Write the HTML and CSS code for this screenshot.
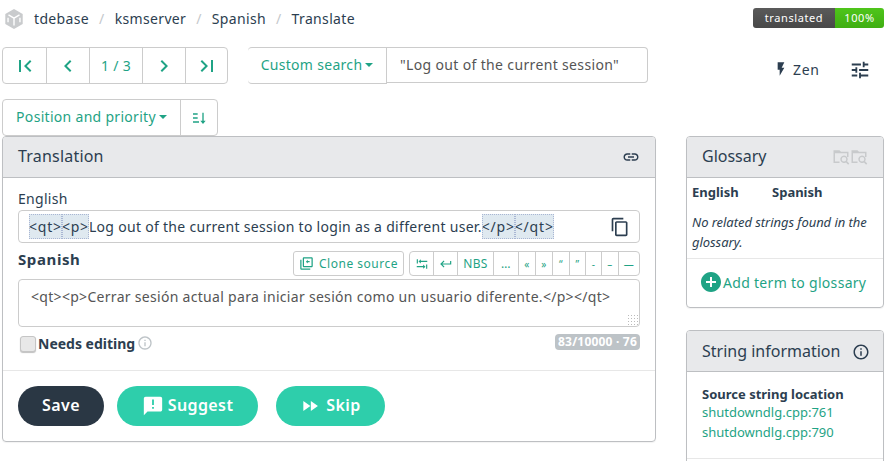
FILE: index.html
```html
<!DOCTYPE html>
<html lang="en">
<head>
    <meta charset="UTF-8">
    <title>Translate</title>
    <link rel="stylesheet" href="styles.css">
</head>
<body>

<header class="topbar">
    <nav class="crumbs">
        <svg class="logo" viewBox="0 0 24 24"><path d="M12 1 2.500 6.500v11L12 23l9.500-5.500v-11z"/><path class="logo-lines" d="M6 7.500 12 11l6-3.500M12 11v8M5.500 10.500v5M18.500 10.500v5"/></svg>
        <a>tdebase</a><span class="sep">/</span>
        <a>ksmserver</a><span class="sep">/</span>
        <a>Spanish</a><span class="sep">/</span>
        <a>Translate</a>
    </nav>
    <div class="badge"><span class="badge-label">translated</span><span class="badge-value">100%</span></div>
</header>

<div class="toolbar">
    <div class="btn-group">
        <a class="btn nav-btn"><svg viewBox="0 0 24 24"><path d="M18.410 16.590 13.820 12l4.590-4.590L17 6l-6 6 6 6zM6 6h2v12H6z"/></svg></a>
        <a class="btn nav-btn"><svg viewBox="0 0 24 24"><path d="M15.410 16.580 10.830 12l4.580-4.590L14 6l-6 6 6 6z"/></svg></a>
        <a class="btn nav-pos">1 / 3</a>
        <a class="btn nav-btn"><svg viewBox="0 0 24 24"><path d="M8.590 16.580 13.170 12 8.590 7.410 10 6l6 6-6 6z"/></svg></a>
        <a class="btn nav-btn last"><svg viewBox="0 0 24 24"><path d="M5.590 7.410 10.180 12l-4.590 4.590L7 18l6-6-6-6zM16 6h2v12h-2z"/></svg></a>
    </div>
    <div class="search">
        <a class="btn search-type">Custom search<span class="caret"></span></a>
        <div class="search-input">"Log out of the current session"</div>
    </div>
    <a class="zen"><svg viewBox="0 0 24 24"><path d="M7 2v11h3v9l7-12h-4l4-8z"/></svg>Zen</a>
    <svg class="tune" viewBox="0 0 24 24"><path d="M3 17v2h6v-2H3zM3 5v2h10V5H3zm10 16v-2h8v-2h-8v-2h-2v6h2zM7 9v2H3v2h4v2h2V9H7zm14 4v-2H11v2h10zm-6-4h2V7h4V5h-4V3h-2v6z"/></svg>
</div>

<div class="sortbar">
    <div class="btn-group">
        <a class="btn sort-type">Position and priority<span class="caret"></span></a>
        <a class="btn sort-dir"><svg viewBox="0 0 24 24"><path d="M3 5h7v2H3zm0 6h7v2H3zm0 6h9v2H3zM17 4h2v12h3l-4 5-4-5h3z"/></svg></a>
    </div>
</div>

<main class="columns">
    <section class="panel translation">
        <div class="panel-heading">
            <h4>Translation</h4>
            <svg class="heading-icon" viewBox="0 0 24 24"><path d="M3.900 12c0-1.710 1.390-3.100 3.100-3.100h4V7H7c-2.760 0-5 2.240-5 5s2.240 5 5 5h4v-1.900H7c-1.710 0-3.100-1.390-3.100-3.100zM8 13h8v-2H8v2zm9-6h-4v1.900h4c1.710 0 3.100 1.390 3.100 3.100s-1.390 3.100-3.100 3.100h-4V17h4c2.760 0 5-2.240 5-5s-2.240-5-5-5z"/></svg>
        </div>
        <div class="panel-body">
            <div class="source-label">English</div>
            <div class="source">
                <span class="source-text"><span class="hl">&lt;qt&gt;</span><span class="hl">&lt;p&gt;</span>Log out of the current session to login as a different user.<span class="hl">&lt;/p&gt;</span><span class="hl">&lt;/qt&gt;</span></span>
                <svg class="copy" viewBox="0 0 24 24"><path d="M16 1H4c-1.100 0-2 .9-2 2v14h2V3h12V1zm3 4H8c-1.100 0-2 .9-2 2v14c0 1.100.9 2 2 2h11c1.100 0 2-.9 2-2V7c0-1.100-.9-2-2-2zm0 16H8V7h11v14z"/></svg>
            </div>
            <div class="target-head">
                <label class="target-label">Spanish</label>
                <a class="btn-xs clone"><svg viewBox="0 0 24 24"><path d="M4 6H2v14c0 1.100.9 2 2 2h14v-2H4V6zm16-4H8c-1.100 0-2 .9-2 2v12c0 1.100.9 2 2 2h12c1.100 0 2-.9 2-2V4c0-1.100-.9-2-2-2zm0 14H8V4h12v12zM14 6l-3 3 3 3v-2h3V8h-3z"/></svg>Clone source</a>
                <div class="btn-group chars">
                    <a class="btn-xs"><svg viewBox="0 0 24 24"><path d="M3 4h2v7H3zm3 3.500L10 4v2.500h11v2H10V11zM19 13h2v7h-2zm-1 3.500L14 13v2.500H3v2h11V20z"/></svg></a>
                    <a class="btn-xs"><svg viewBox="0 0 24 24"><path d="M19 7v4H5.830l3.580-3.590L8 6l-6 6 6 6 1.410-1.410L5.830 13H21V7z"/></svg></a>
                    <a class="btn-xs">NBS</a>
                    <a class="btn-xs">…</a>
                    <a class="btn-xs small">«</a>
                    <a class="btn-xs small">»</a>
                    <a class="btn-xs small">“</a>
                    <a class="btn-xs small">”</a>
                    <a class="btn-xs small">-</a>
                    <a class="btn-xs small">–</a>
                    <a class="btn-xs small">—</a>
                </div>
            </div>
            <div class="target">&lt;qt&gt;&lt;p&gt;Cerrar sesión actual para iniciar sesión como un usuario diferente.&lt;/p&gt;&lt;/qt&gt;<span class="grip"></span></div>
            <div class="target-foot">
                <label class="check"><span class="checkbox"></span>Needs editing</label>
                <svg class="help" viewBox="0 0 24 24"><path d="M11 7h2v2h-2zm0 4h2v6h-2zm1-9C6.480 2 2 6.480 2 12s4.480 10 10 10 10-4.480 10-10S17.520 2 12 2zm0 18c-4.410 0-8-3.590-8-8s3.590-8 8-8 8 3.590 8 8-3.590 8-8 8z"/></svg>
                <span class="counter">83/10000 · 76</span>
            </div>
        </div>
        <div class="panel-footer">
            <button class="pill save">Save</button>
            <button class="pill suggest"><svg viewBox="0 0 24 24"><path d="M20 2H4c-1.100 0-2 .9-2 2v18l4-4h14c1.100 0 2-.9 2-2V4c0-1.100-.9-2-2-2zm-7 9h-2V5h2v6zm0 4h-2v-2h2v2z"/></svg>Suggest</button>
            <button class="pill skip"><svg viewBox="0 0 24 24"><path d="M4 18l8.500-6L4 6v12zm9-12v12l8.500-6L13 6z"/></svg>Skip</button>
        </div>
    </section>

    <aside class="sidebar">
        <section class="panel">
            <div class="panel-heading side-heading">
                <h4>Glossary</h4>
                <span class="folder-icons">
                    <svg viewBox="0 0 24 24"><path d="M2 3h8l2 2h10v7h-2V7H4v11h6v2H2zm14 7a5 5 0 0 1 4.100 7.800l2.900 2.900-1.500 1.500-2.900-2.900A5 5 0 1 1 16 10zm0 2a3 3 0 1 0 0 6 3 3 0 0 0 0-6z"/></svg>
                    <svg viewBox="0 0 24 24"><path d="M2 3h8l2 2h10v7h-2V7H4v11h6v2H2zm14 7a5 5 0 0 1 4.100 7.800l2.900 2.900-1.500 1.500-2.900-2.900A5 5 0 1 1 16 10zm0 2a3 3 0 1 0 0 6 3 3 0 0 0 0-6z"/></svg>
                </span>
            </div>
            <div class="gloss-cols"><b>English</b><b>Spanish</b></div>
            <p class="gloss-empty">No related strings found in the glossary.</p>
            <div class="gloss-add">
                <svg viewBox="0 0 24 24"><path d="M12 2C6.480 2 2 6.480 2 12s4.480 10 10 10 10-4.480 10-10S17.520 2 12 2zm5 11h-4v4h-2v-4H7v-2h4V7h2v4h4v2z"/></svg>
                <a>Add term to glossary</a>
            </div>
        </section>
        <section class="panel info">
            <div class="panel-heading side-heading">
                <h4>String information</h4>
                <svg class="heading-icon" viewBox="0 0 24 24"><path d="M11 7h2v2h-2zm0 4h2v6h-2zm1-9C6.480 2 2 6.480 2 12s4.480 10 10 10 10-4.480 10-10S17.520 2 12 2zm0 18c-4.410 0-8-3.590-8-8s3.590-8 8-8 8 3.590 8 8-3.590 8-8 8z"/></svg>
            </div>
            <div class="info-body">
                <b>Source string location</b>
                <a>shutdowndlg.cpp:761</a>
                <a>shutdowndlg.cpp:790</a>
            </div>
            <div class="info-next"></div>
        </section>
    </aside>
</main>

</body>
</html>
```

FILE: styles.css
```css
* {
    box-sizing: border-box;
}
html, body {
    height: 461px;
    overflow: hidden;
}
body {
    margin: 0;
    background: #fff;
    color: #2c3e50;
    font-family: "Noto Sans", sans-serif;
    font-size: 14px;
    letter-spacing: .3px;
}
svg {
    fill: currentColor;
    display: block;
    flex: none;
}

/* top bar */
.topbar {
    display: flex;
    justify-content: space-between;
    height: 47px;
    padding: 8px 4px 0 3px;
}
.crumbs {
    display: flex;
    align-items: center;
    height: 20px;
    letter-spacing: .35px;
}
.logo {
    width: 22px;
    height: 22px;
    color: #c9cbcd;
    margin: 2px 9px 0 0;
}
.logo-lines {
    fill: none;
    stroke: #fff;
    stroke-width: 1.5;
}
.sep {
    color: #c4c8cc;
    margin: 0 10px;
}
.badge {
    display: flex;
    height: 20px;
    border-radius: 3px;
    overflow: hidden;
    color: #fff;
    font-size: 11px;
    letter-spacing: .6px;
    line-height: 20px;
    text-align: center;
}
.badge-label {
    width: 82px;
    background: linear-gradient(#5a5a5a, #484848);
}
.badge-value {
    width: 49px;
    background: linear-gradient(#4fc51b, #3fae12);
}

/* toolbars */
.toolbar {
    display: flex;
    align-items: flex-start;
    height: 52px;
    padding-left: 2px;
}
.btn-group {
    display: flex;
    border: 1px solid #ccc;
    border-radius: 4px;
}
.btn {
    display: flex;
    align-items: center;
    justify-content: center;
    height: 35px;
    color: #1fa385;
    border-left: 1px solid #ccc;
}
.btn:first-child {
    border-left: 0;
}
.btn svg {
    width: 24px;
    height: 24px;
}
.nav-btn {
    width: 43px;
}
.nav-btn.last {
    width: 42px;
}
.nav-pos {
    width: 53px;
}
.search {
    display: flex;
    margin-left: 20px;
    width: 400px;
}
.search-type {
    width: 139px;
    height: 37px;
    border: 1px solid #ccc;
    border-radius: 4px 0 0 4px;
    padding-bottom: 2px;
}
.search-input {
    flex: 1;
    height: 36px;
    padding: 7px 13px;
    border: 1px solid #ccc;
    border-left: 0;
    border-radius: 0 4px 4px 0;
    color: #555;
    letter-spacing: .35px;
}
.caret {
    width: 0;
    height: 0;
    margin-left: 3px;
    border-left: 4px solid transparent;
    border-right: 4px solid transparent;
    border-top: 4px solid #1fa385;
}
.zen {
    display: flex;
    align-items: center;
    height: 44px;
    margin-left: 125px;
    letter-spacing: .7px;
}
.zen svg {
    width: 16px;
    height: 16px;
    margin-right: 4px;
}
.tune {
    width: 22px;
    height: 22px;
    margin: 12px 0 0 29px;
}
.sortbar {
    display: flex;
    height: 37px;
    padding-left: 2px;
}
.sort-type {
    width: 177px;
    padding-bottom: 2px;
}
.sort-dir {
    width: 37px;
}
.sort-dir svg {
    width: 16px;
    height: 16px;
}

/* layout */
.columns {
    display: flex;
    align-items: flex-start;
    padding-left: 2px;
}
.panel {
    border: 1px solid #bdbfc2;
    border-radius: 4px;
    box-shadow: 0 1px 1px rgba(0, 0, 0, .05);
    overflow: hidden;
}
.translation {
    width: 654px;
    height: 306px;
}
.sidebar {
    width: 198px;
    margin-left: 30px;
}
.panel-heading {
    display: flex;
    align-items: center;
    justify-content: space-between;
    height: 41px;
    padding: 0 15px;
    background: #e8e9eb;
    border-bottom: 1px solid #bdbfc2;
}
.panel-heading h4 {
    margin: 0 0 2px;
    font-size: 16px;
    font-weight: 400;
    letter-spacing: 0;
}
.translation .panel-heading h4 {
    letter-spacing: .2px;
}
.info .panel-heading h4 {
    margin: 0;
}
.heading-icon {
    width: 18px;
    height: 18px;
}
.info .heading-icon {
    margin: 2px -2px 0 0;
}

/* translation form */
.panel-body {
    height: 193px;
    padding: 11px 15px 0;
    border-bottom: 1px solid #e7e7e7;
}
.source-label {
    line-height: 20px;
}
.source {
    display: flex;
    align-items: center;
    justify-content: space-between;
    height: 33px;
    padding: 0 9px 0 10px;
    margin-top: 1px;
    border: 1px solid #ccc;
    border-radius: 4px;
}
.source-text {
    white-space: nowrap;
}
.hl {
    background: #dfe9f0;
    outline: 1px dotted #a9b6d3;
    outline-offset: -1px;
    padding: 3px 0;
    letter-spacing: .8px;
}
.copy {
    width: 20px;
    height: 20px;
}
.target-head {
    display: flex;
    align-items: center;
    height: 25px;
    margin-top: 8px;
}
.target-label {
    margin: 0 auto 9px 0;
    font-size: 15px;
    font-weight: 700;
    letter-spacing: .6px;
}
.btn-xs {
    display: flex;
    align-items: center;
    justify-content: center;
    height: 23px;
    color: #1fa385;
    font-size: 12px;
    border-left: 1px solid #ccc;
}
.btn-xs:first-child {
    border-left: 0;
}
.btn-xs svg {
    width: 14px;
    height: 14px;
}
.chars {
    display: grid;
    grid-template-columns: 23px 24px 36px 25px 17px 17px 17px 16px 16px 17px 21px;
}
.small {
    font-size: 10px;
}
.clone {
    width: 111px;
    height: 25px;
    border: 1px solid #ccc;
    border-radius: 3px;
    margin-right: 5px;
    letter-spacing: .5px;
}
.clone svg {
    width: 15px;
    height: 15px;
    margin-right: 5px;
}
.target {
    position: relative;
    height: 48px;
    margin-top: 3px;
    padding: 7px 12px;
    border: 1px solid #ccc;
    border-radius: 4px;
    color: #555;
    letter-spacing: .3px;
    white-space: nowrap;
}
.grip {
    position: absolute;
    right: 1px;
    bottom: 1px;
    width: 11px;
    height: 11px;
    background: radial-gradient(circle, #bbb 1px, transparent 1px) 0 0 / 3px 3px;
}
.target-foot {
    display: flex;
    align-items: center;
    height: 20px;
    margin-top: 6px;
}
.check {
    display: flex;
    align-items: center;
    font-weight: 700;
    letter-spacing: 0;
}
.checkbox {
    width: 16px;
    height: 16px;
    margin: 2px 2px 0 2px;
    background: #e8e8e8;
    border: 1px solid #c5c5c5;
    border-radius: 3px;
    box-shadow: 0 1px 1px rgba(0, 0, 0, .25);
}
.help {
    width: 16px;
    height: 16px;
    margin-left: 2px;
    color: #bdc3c7;
}
.counter {
    align-self: flex-start;
    margin: 1px 0 0 auto;
    height: 16px;
    padding: 0 3px;
    background: #bdc3c7;
    border-radius: 4px;
    color: #fff;
    font-size: 12px;
    font-weight: 700;
    letter-spacing: .2px;
    line-height: 16px;
}
.panel-footer {
    display: flex;
    padding: 15px;
}
.pill {
    display: flex;
    align-items: center;
    justify-content: center;
    height: 40px;
    padding: 0 0 2px;
    border: 0;
    border-radius: 20px;
    color: #fff;
    font-family: inherit;
    font-size: 16px;
    font-weight: 600;
    letter-spacing: .4px;
}
.pill svg {
    margin: 2px 4px 0 0;
}
.suggest svg {
    width: 22px;
    height: 22px;
}
.skip svg {
    width: 20px;
    height: 20px;
    margin-right: 6px;
}
.save {
    width: 86px;
    background: #2a3744;
}
.suggest {
    width: 141px;
    margin-left: 13px;
    background: #2eceab;
}
.skip {
    width: 109px;
    margin-left: 18px;
    background: #2eceab;
}

/* sidebar */
.folder-icons {
    display: flex;
    color: #c8cacc;
}
.folder-icons svg {
    width: 18px;
    height: 18px;
}
.gloss-cols {
    display: flex;
    padding: 5px 5px 0;
    font-size: 13px;
    letter-spacing: 0;
    line-height: 18px;
}
.gloss-cols b {
    width: 80px;
}
.gloss-empty {
    margin: 11px 5px 6px;
    font-size: 13px;
    font-style: italic;
    letter-spacing: -.05px;
    line-height: 20px;
}
.gloss-add {
    display: flex;
    align-items: center;
    height: 49px;
    padding: 0 0 2px 12px;
    border-top: 1px solid #e7e7e7;
    color: #1fa385;
}
.gloss-add svg {
    width: 24px;
    height: 24px;
}
.info {
    height: 140px;
    margin-top: 22px;
}
.info-body {
    display: flex;
    flex-direction: column;
    height: 86px;
    padding: 14px 15px 0;
    font-size: 13px;
    letter-spacing: 0;
    line-height: 20px;
}
.info-body b {
    line-height: 16px;
}
.info-body a {
    color: #1fa385;
}
.info-next {
    border-top: 1px solid #e7e7e7;
}
```
